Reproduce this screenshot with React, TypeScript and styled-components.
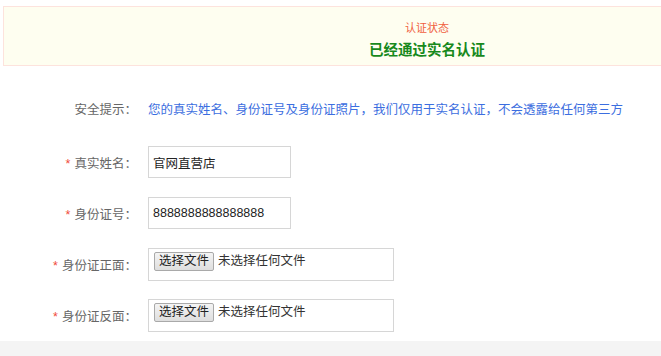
import React from "react";
import styled, { createGlobalStyle } from "styled-components";

const GlobalStyle = createGlobalStyle`
  html, body {
    margin: 0;
    padding: 0;
    background: #fff;
    font-family: "Liberation Sans", "Noto Sans CJK SC", sans-serif;
    overflow: hidden;
  }
`;

const Page = styled.div`
  width: 848px;
  padding: 6px 0 0 3px;
`;

// status banner
const StatusBox = styled.div`
  height: 60px;
  box-sizing: border-box;
  border: 1px solid #fde3dd;
  background: #fefef0;
  display: flex;
  flex-direction: column;
  align-items: center;
  padding-top: 13px;
`;

const StatusLabel = styled.div`
  color: #f0603e;
  font-size: 11px;
  line-height: 16px;
`;

const StatusText = styled.div`
  color: #17891c;
  font-size: 14.5px;
  font-weight: bold;
  line-height: 20px;
  margin-top: 4px;
`;

const Form = styled.div`
  padding-top: 30px;
  display: flex;
  flex-direction: column;
`;

const Row = styled.div<{ $height: number; $gap: number }>`
  display: flex;
  align-items: center;
  height: ${(p) => p.$height}px;
  margin-bottom: ${(p) => p.$gap}px;
`;

const Label = styled.div`
  width: 134px;
  text-align: right;
  color: #666;
  font-size: 12.5px;
  margin-right: 11px;
  white-space: nowrap;
`;

const Star = styled.span`
  color: #f04a3a;
  margin-right: 4px;
`;

const Tip = styled.div`
  color: #3c6ee0;
  font-size: 12.5px;
  white-space: nowrap;
`;

const TextBox = styled.div`
  width: 143px;
  height: 32px;
  box-sizing: border-box;
  border: 1px solid #d6d6d6;
  padding: 0 4px;
  display: flex;
  align-items: center;
  font-size: 12.5px;
  color: #222;
`;

const FileBox = styled.div`
  width: 246px;
  height: 33px;
  box-sizing: border-box;
  border: 1px solid #d6d6d6;
  padding: 3px 5px;
  display: flex;
  align-items: flex-start;
  gap: 4px;
  font-size: 12.5px;
  color: #333;
`;

const FileButton = styled.button`
  height: 19px;
  padding: 0 4px;
  font-family: inherit;
  font-size: 12.5px;
  line-height: 17px;
  color: #222;
  background: linear-gradient(#f4f4f4, #dedede);
  border: 1px solid #a9a9a9;
  border-radius: 2px;
`;

const FileName = styled.span`
  line-height: 19px;
`;

const Footer = styled.div`
  height: 40px;
  background: #f4f4f4;
`;

const fileRows = ["身份证正面", "身份证反面"];

const App: React.FC = () => {
  return (
    <>
      <GlobalStyle />
      <Page>
        <StatusBox>
          <StatusLabel>认证状态</StatusLabel>
          <StatusText>已经通过实名认证</StatusText>
        </StatusBox>

        <Form>
          <Row $height={24} $gap={26}>
            <Label>安全提示：</Label>
            <Tip>
              您的真实姓名、身份证号及身份证照片，我们仅用于实名认证，不会透露给任何第三方
            </Tip>
          </Row>

          <Row $height={32} $gap={19}>
            <Label>
              <Star>*</Star>真实姓名：
            </Label>
            <TextBox>官网直营店</TextBox>
          </Row>

          <Row $height={32} $gap={19}>
            <Label>
              <Star>*</Star>身份证号：
            </Label>
            <TextBox>8888888888888888</TextBox>
          </Row>

          {fileRows.map((name, i) => (
            <Row key={name} $height={33} $gap={i === 0 ? 18 : 9}>
              <Label>
                <Star>*</Star>
                {name}：
              </Label>
              <FileBox>
                <FileButton>选择文件</FileButton>
                <FileName>未选择任何文件</FileName>
              </FileBox>
            </Row>
          ))}
        </Form>
      </Page>
      <Footer />
    </>
  );
};

export default App;
